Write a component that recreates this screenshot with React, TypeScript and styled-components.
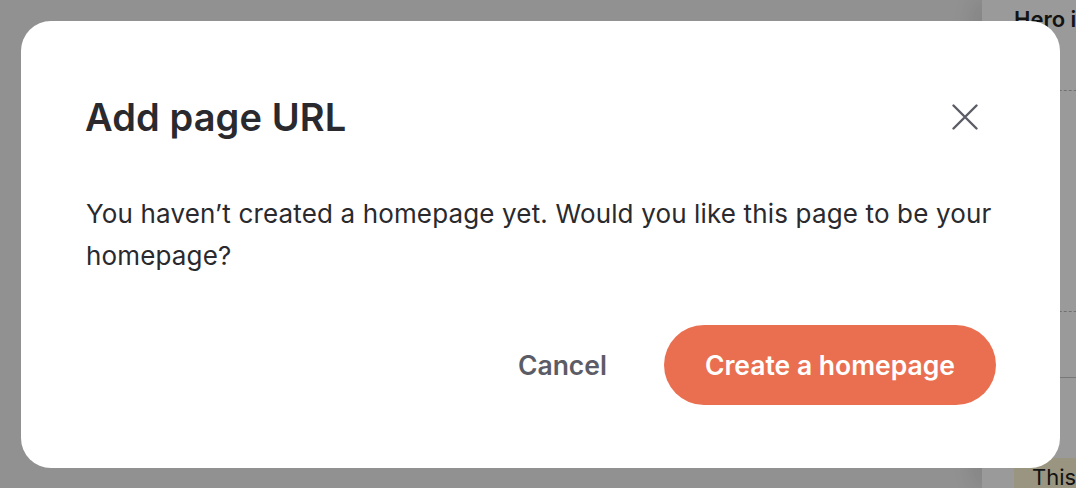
import React from 'react';
import styled, { createGlobalStyle } from 'styled-components';

const GlobalStyle = createGlobalStyle`
  html, body {
    margin: 0;
    padding: 0;
    height: 100%;
    overflow: hidden;
  }
  body {
    font-family: Inter, "Noto Sans", sans-serif;
    background: #eeeeee;
  }
  #root {
    height: 100%;
  }
`;

const Page = styled.div`
  height: 100vh;
  display: flex;
  justify-content: flex-end;
  background: #eeeeee;
`;

const Sidebar = styled.aside`
  width: 94px;
  box-sizing: border-box;
  padding: 6px 0 0 32px;
  background: #fcfcfc;
  box-shadow: -10px 0 24px rgba(0, 0, 0, 0.1);
  display: flex;
  flex-direction: column;
  overflow: hidden;
  white-space: nowrap;

  & > * {
    flex-shrink: 0;
  }
`;

const SideTitle = styled.div`
  font-size: 22px;
  font-weight: 600;
  color: #1f1f22;
  line-height: 26px;
`;

const SideText = styled.div`
  font-size: 22px;
  color: #1f1f22;
  line-height: 26px;
  margin-top: 20px;
`;

const DashedBox = styled.div`
  margin-top: 12px;
  height: 220px;
  width: 200px;
  border: 1px dashed #b8b8b8;
`;

const Divider = styled.div`
  margin-top: 65px;
  height: 1px;
  width: 200px;
  background: #c4c4c4;
`;

const Highlight = styled.div`
  margin-top: 80px;
  background: #fcf3d2;
  padding: 6px 18px;
  font-size: 22px;
  color: #1f1f22;
  line-height: 26px;
`;

const Overlay = styled.div`
  position: fixed;
  inset: 0;
  background: rgba(0, 0, 0, 0.39);
  display: flex;
  padding: 21px 16px 20px 21px;
  box-sizing: border-box;
`;

const Modal = styled.div`
  flex: 1;
  background: #ffffff;
  border-radius: 30px;
  padding: 62px 64px 0 64px;
  box-sizing: border-box;
  display: flex;
  flex-direction: column;
`;

const Header = styled.div`
  display: flex;
  align-items: center;
  justify-content: space-between;
`;

const Title = styled.h2`
  margin: 0;
  font-size: 38px;
  font-weight: 600;
  color: #2a2a2e;
  letter-spacing: 0.1px;
  line-height: 68px;
`;

const CloseButton = styled.button`
  border: none;
  background: none;
  padding: 0;
  width: 32px;
  height: 32px;
  display: flex;
  align-items: center;
  justify-content: center;
  margin-right: 15px;
  cursor: pointer;
  color: #5c5c66;
`;

const Body = styled.p`
  margin: 42px 0 0 1px;
  font-size: 26px;
  line-height: 42px;
  color: #2a2a2e;
  letter-spacing: 0.15px;
`;

const Actions = styled.div`
  margin-top: 48px;
  display: flex;
  justify-content: flex-end;
  align-items: center;
  gap: 57px;
`;

const TextButton = styled.button`
  border: none;
  background: none;
  padding: 0;
  font-family: inherit;
  font-size: 26.5px;
  font-weight: 600;
  color: #5c5c66;
  cursor: pointer;
`;

const PrimaryButton = styled.button`
  border: none;
  height: 80px;
  padding: 0 41px;
  border-radius: 40px;
  background: #e96f50;
  color: #ffffff;
  font-family: inherit;
  font-size: 26.5px;
  font-weight: 600;
  cursor: pointer;
`;

const CloseIcon = () => (
  <svg width="26" height="26" viewBox="0 0 26 26" fill="none">
    <path d="M1.5 1.5 L24.5 24.5 M24.5 1.5 L1.5 24.5" stroke="currentColor" strokeWidth="2.4" strokeLinecap="round" />
  </svg>
);

export default function App() {
  return (
    <>
      <GlobalStyle />
      <Page>
        <Sidebar>
          <SideTitle>Hero image</SideTitle>
          <SideText>on</SideText>
          <DashedBox />
          <Divider />
          <Highlight>This</Highlight>
        </Sidebar>
      </Page>
      <Overlay>
        <Modal>
          <Header>
            <Title>Add page URL</Title>
            <CloseButton aria-label="Close">
              <CloseIcon />
            </CloseButton>
          </Header>
          <Body>
            You haven’t created a homepage yet. Would you like this page to be your homepage?
          </Body>
          <Actions>
            <TextButton>Cancel</TextButton>
            <PrimaryButton>Create a homepage</PrimaryButton>
          </Actions>
        </Modal>
      </Overlay>
    </>
  );
}
